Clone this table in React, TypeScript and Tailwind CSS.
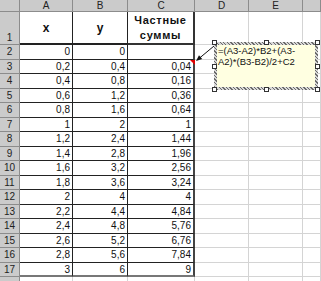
import React from 'react'

const colA = ['0', '0,2', '0,4', '0,6', '0,8', '1', '1,2', '1,4', '1,6', '1,8', '2', '2,2', '2,4', '2,6', '2,8', '3']
const colB = ['0', '0,4', '0,8', '1,2', '1,6', '2', '2,4', '2,8', '3,2', '3,6', '4', '4,4', '4,8', '5,2', '5,6', '6']
const colC = ['', '0,04', '0,16', '0,36', '0,64', '1', '1,44', '1,96', '2,56', '3,24', '4', '4,84', '5,76', '6,76', '7,84', '9']

const hdr = 'bg-[#cbcbcb] border-r border-b border-[#8c8c8c] text-[10px] text-[#222] text-center'
const grid = 'border-r border-b border-[#d4d4d4]'

export default function App() {
  return (
    <div className="relative w-[321px] h-[281px] overflow-hidden bg-white text-[#111] font-['Liberation_Sans',Arial,sans-serif]">
      <div className="grid grid-cols-[20px_53px_55px_67px_54px_54px_18px] grid-rows-[12px_33px_repeat(16,14.5px)_12px]">
        {/* column letters */}
        <div className={hdr} />
        {['A', 'B', 'C', 'D', 'E', 'F'].map((l) => (
          <div key={l} className={`${hdr} leading-[11px]`}>
            {l === 'F' ? '' : l}
          </div>
        ))}

        {/* row 1 */}
        <div className={`${hdr} flex items-end justify-center pb-[1px] leading-[11px]`}>1</div>
        <div className="border-r border-b-2 border-[#222] flex items-center justify-center text-[12px] font-bold">x</div>
        <div className="border-r border-b-2 border-[#222] flex items-center justify-center text-[12px] font-bold">y</div>
        <div className="border-r-2 border-b-2 border-[#333] flex flex-col items-center justify-center text-[11px] font-bold leading-[15px] tracking-[0.7px]">
          <span>Частные</span>
          <span>суммы</span>
        </div>
        <div className={grid} />
        <div className={grid} />
        <div className={grid} />

        {/* rows 2..17 */}
        {colA.map((a, i) => {
          const last = i === colA.length - 1
          const b = last ? 'border-b-2 border-b-[#777]' : 'border-b border-b-[#222]'
          return (
            <React.Fragment key={i}>
              <div className={`${hdr} leading-[14px]`}>{i + 2}</div>
              <div className={`border-r border-r-[#222] ${b} text-right pr-[2px] text-[10px] leading-[13px]`}>{a}</div>
              <div className={`border-r border-r-[#222] ${b} text-right pr-[2px] text-[10px] leading-[13px]`}>{colB[i]}</div>
              <div className={`border-r-2 border-r-[#444] ${b} text-right pr-[2px] text-[10px] leading-[13px]`}>{colC[i]}</div>
              <div className={grid} />
              <div className={grid} />
              <div className={grid} />
            </React.Fragment>
          )
        })}

        {/* row 18, only a sliver shows */}
        <div className={hdr} />
        <div className={grid} />
        <div className={grid} />
        <div className={grid} />
        <div className={grid} />
        <div className={grid} />
        <div className={grid} />
      </div>

      {/* comment arrow + red marker */}
      <svg className="absolute left-0 top-0" width="321" height="281">
        <line x1="214" y1="46" x2="199" y2="58.5" stroke="#111" strokeWidth="1" />
        <polygon points="196,61 202.2,59.1 199,55.3" fill="#111" />
        <polygon points="190,60 195,60 195,65" fill="#e00000" />
      </svg>

      {/* comment box */}
      <div className="absolute left-[214px] top-[42px] w-[104px] h-[48px] p-[3px] bg-[repeating-linear-gradient(45deg,#6a6a6a_0_1px,#d8d8d8_1px_2.5px)]">
        <div className="w-full h-full bg-[#ffffe1] px-[1px] text-[9.5px] leading-[11px] text-[#111] whitespace-nowrap">
          <div>=(A3-A2)*B2+(A3-</div>
          <div>A2)*(B3-B2)/2+C2</div>
        </div>
        <div className="absolute left-[-2px] top-[-2px] w-[5px] h-[5px] bg-white border border-[#333]" />
        <div className="absolute left-[50px] top-[-2px] w-[5px] h-[5px] bg-white border border-[#333]" />
        <div className="absolute right-[-2px] top-[-2px] w-[5px] h-[5px] bg-white border border-[#333]" />
        <div className="absolute left-[-2px] top-[22px] w-[5px] h-[5px] bg-white border border-[#333]" />
        <div className="absolute right-[-2px] top-[22px] w-[5px] h-[5px] bg-white border border-[#333]" />
        <div className="absolute left-[-2px] bottom-[-2px] w-[5px] h-[5px] bg-white border border-[#333]" />
        <div className="absolute left-[50px] bottom-[-2px] w-[5px] h-[5px] bg-white border border-[#333]" />
        <div className="absolute right-[-2px] bottom-[-2px] w-[5px] h-[5px] bg-white border border-[#333]" />
      </div>
    </div>
  )
}
